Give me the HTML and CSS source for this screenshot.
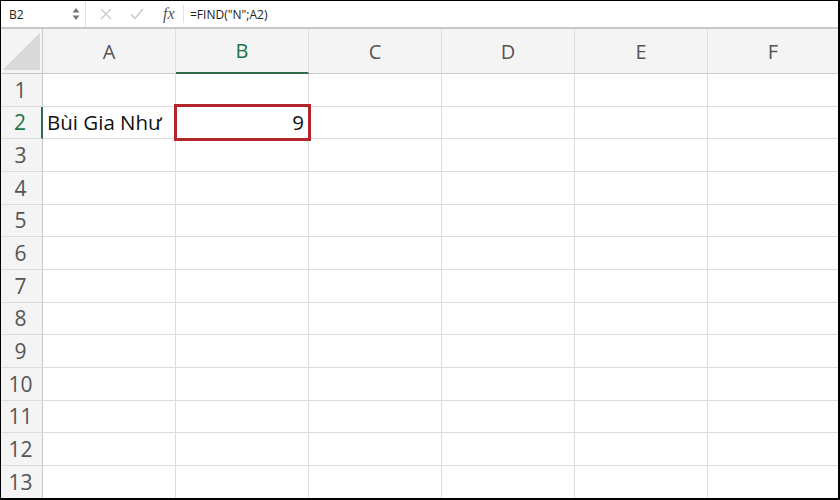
FILE: index.html
```html
<!DOCTYPE html>
<html lang="vi">
<head>
    <meta charset="UTF-8">
    <title>FIND</title>
    <link rel="stylesheet" href="styles.css">
</head>
<body>
    <div class="sheet">
        <div class="formula-bar">
            <div class="name-box">
                <span>B2</span>
                <svg class="spin" width="8" height="16" viewBox="0 0 8 16">
                    <path d="M4 2 L7.5 6.5 L0.5 6.5 Z" fill="#777"/>
                    <path d="M4 14 L7.5 9.5 L0.5 9.5 Z" fill="#777"/>
                </svg>
            </div>
            <div class="actions">
                <svg width="12" height="12" viewBox="0 0 12 12"><path d="M1 1 L11 11 M11 1 L1 11" stroke="#c9c9c9" stroke-width="1.4"/></svg>
                <svg width="14" height="12" viewBox="0 0 14 12"><path d="M1 6.5 L5 10.5 L13 1" stroke="#c9c9c9" stroke-width="1.4" fill="none"/></svg>
                <span class="fx">fx</span>
            </div>
            <div class="formula">=FIND("N";A2)</div>
        </div>

        <div class="grid">
            <div class="corner"><div class="tri"></div></div>
            <div class="col-head">A</div>
            <div class="col-head active">B</div>
            <div class="col-head">C</div>
            <div class="col-head">D</div>
            <div class="col-head">E</div>
            <div class="col-head last">F</div>

            <div class="row-head">1</div>
            <div class="cell"></div><div class="cell"></div><div class="cell"></div><div class="cell"></div><div class="cell"></div><div class="cell last"></div>

            <div class="row-head active">2</div>
            <div class="cell">Bùi Gia Như</div>
            <div class="cell num selected">9</div>
            <div class="cell"></div><div class="cell"></div><div class="cell"></div><div class="cell last"></div>

            <div class="row-head">3</div>
            <div class="cell"></div><div class="cell"></div><div class="cell"></div><div class="cell"></div><div class="cell"></div><div class="cell last"></div>
            <div class="row-head">4</div>
            <div class="cell"></div><div class="cell"></div><div class="cell"></div><div class="cell"></div><div class="cell"></div><div class="cell last"></div>
            <div class="row-head">5</div>
            <div class="cell"></div><div class="cell"></div><div class="cell"></div><div class="cell"></div><div class="cell"></div><div class="cell last"></div>
            <div class="row-head">6</div>
            <div class="cell"></div><div class="cell"></div><div class="cell"></div><div class="cell"></div><div class="cell"></div><div class="cell last"></div>
            <div class="row-head">7</div>
            <div class="cell"></div><div class="cell"></div><div class="cell"></div><div class="cell"></div><div class="cell"></div><div class="cell last"></div>
            <div class="row-head">8</div>
            <div class="cell"></div><div class="cell"></div><div class="cell"></div><div class="cell"></div><div class="cell"></div><div class="cell last"></div>
            <div class="row-head">9</div>
            <div class="cell"></div><div class="cell"></div><div class="cell"></div><div class="cell"></div><div class="cell"></div><div class="cell last"></div>
            <div class="row-head">10</div>
            <div class="cell"></div><div class="cell"></div><div class="cell"></div><div class="cell"></div><div class="cell"></div><div class="cell last"></div>
            <div class="row-head">11</div>
            <div class="cell"></div><div class="cell"></div><div class="cell"></div><div class="cell"></div><div class="cell"></div><div class="cell last"></div>
            <div class="row-head">12</div>
            <div class="cell"></div><div class="cell"></div><div class="cell"></div><div class="cell"></div><div class="cell"></div><div class="cell last"></div>
            <div class="row-head">13</div>
            <div class="cell"></div><div class="cell"></div><div class="cell"></div><div class="cell"></div><div class="cell"></div><div class="cell last"></div>
        </div>
    </div>
</body>
</html>
```

FILE: styles.css
```css
body {
    margin: 0;
    padding: 0;
    background: #fff;
    font-family: "Open Sans", Arial, sans-serif;
}

.sheet {
    width: 840px;
    height: 500px;
    box-sizing: border-box;
    border: 1px solid #000;
    border-right-width: 2px;
    border-bottom-width: 2px;
    overflow: hidden;
    background: #fff;
}

/* formula bar */
.formula-bar {
    height: 26px;
    display: flex;
    align-items: center;
    border-bottom: 2px solid #c8c8c8;
    font-size: 12px;
    color: #222;
}

.name-box {
    width: 85px;
    height: 100%;
    display: flex;
    align-items: center;
    justify-content: space-between;
    padding: 0 5px 0 8px;
    box-sizing: border-box;
    border-right: 1px solid #e2e2e2;
}

.actions {
    width: 98px;
    height: 18px;
    display: flex;
    align-items: center;
    gap: 18px;
    padding-left: 14px;
    box-sizing: border-box;
    border-right: 1px solid #e2e2e2;
}

.fx {
    font-family: "Liberation Serif", serif;
    font-style: italic;
    font-size: 16px;
    color: #555;
    margin-left: 1px;
}

.formula {
    padding-left: 6px;
}

/* grid */
.grid {
    display: grid;
    grid-template-columns: 42px repeat(5, 133px) 1fr;
    grid-template-rows: 45px repeat(13, 32.67px);
}

.corner {
    background: #f4f4f4;
    border-right: 1px solid #c8c8c8;
    border-bottom: 1px solid #c8c8c8;
    padding: 3px 2px 3px 2px;
}

.tri {
    width: 100%;
    height: 100%;
    background: linear-gradient(to top left, #d9d9d9 50%, transparent 50%);
}

.col-head {
    background: #f4f4f4;
    border-right: 1px solid #dcdcdc;
    border-bottom: 1px solid #c8c8c8;
    display: flex;
    align-items: center;
    justify-content: center;
    font-size: 20px;
    color: #555;
}

.col-head.active {
    color: #217346;
    border-bottom: 2px solid #2e6b48;
}

.col-head.last, .cell.last {
    border-right: none;
}

.row-head {
    background: #f4f4f4;
    border-right: 1px solid #c8c8c8;
    border-bottom: 1px solid #dcdcdc;
    display: flex;
    align-items: center;
    justify-content: center;
    font-size: 21px;
    color: #555;
    padding-right: 2px;
}

.row-head.active {
    color: #217346;
    border-right: 2px solid #2e6b48;
}

.cell {
    border-right: 1px solid #dcdcdc;
    border-bottom: 1px solid #dcdcdc;
    display: flex;
    align-items: center;
    padding: 0 4px;
    font-size: 20.5px;
    color: #111;
    white-space: nowrap;
}

.cell.num {
    justify-content: flex-end;
}

.cell.selected {
    position: relative;
}

.cell.selected::after {
    content: "";
    position: absolute;
    left: -2px;
    top: -3px;
    right: -3px;
    bottom: -3px;
    border: 3px solid #b3252b;
}
```
